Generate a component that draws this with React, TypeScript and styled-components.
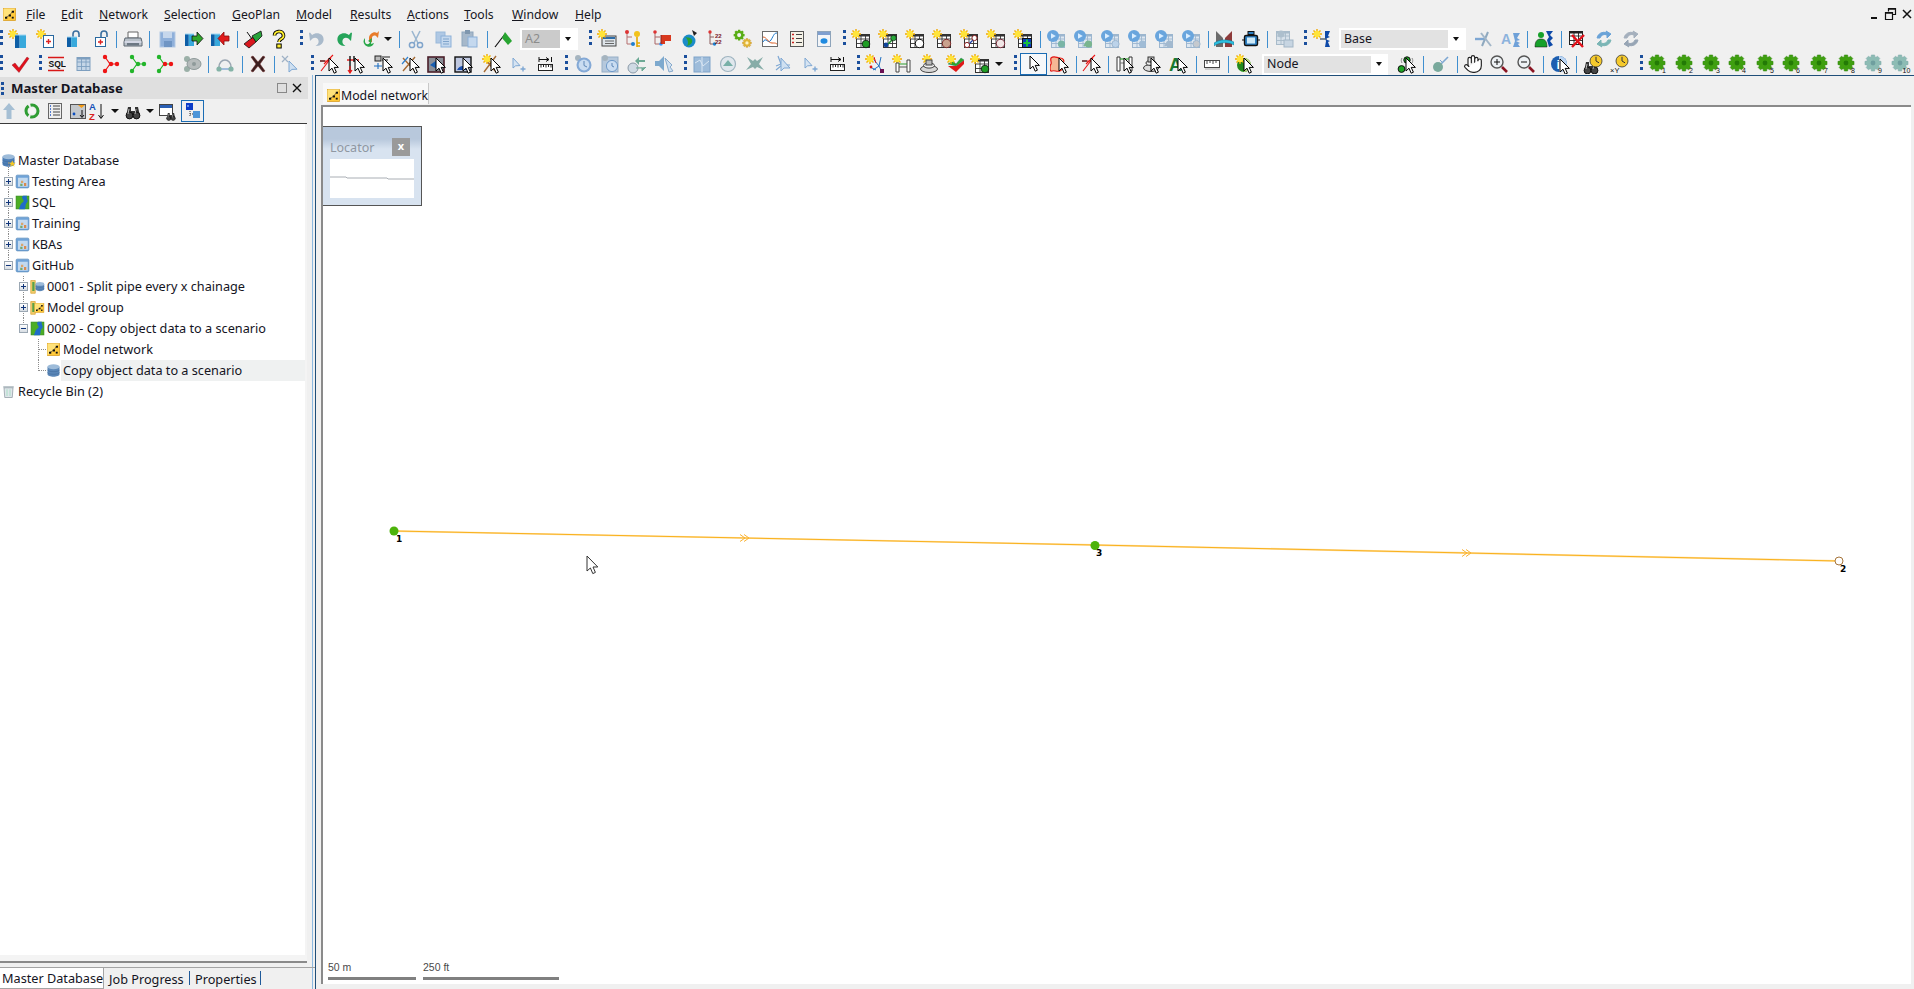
import React from "react";
import styled, { createGlobalStyle } from "styled-components";
import { Hand } from "lucide-react";

const Global = createGlobalStyle`
  html, body { margin: 0; padding: 0; width: 1914px; height: 989px; overflow: hidden; background: #f0f0f0; }
  * { box-sizing: border-box; }
  body { font-family: "Noto Sans", "DejaVu Sans", sans-serif; font-size: 12px; color: #111; }
`;

/* ---------- drawing helpers ---------- */
const Svg = styled.svg<{ $s?: number }>`
  width: ${p => p.$s ?? 20}px;
  height: ${p => p.$s ?? 20}px;
  flex: none;
  display: block;
`;
type P = { x?: number; y?: number };
const Sun = ({ x = 0, y = 0 }: P) => (
  <g transform={`translate(${x} ${y})`}>
    <path d="M5 0v10M0 5h10M1.5 1.5l7 7M8.5 1.5l-7 7" stroke="#f0a800" strokeWidth="1.4" />
    <circle cx="5" cy="5" r="3.2" fill="#ffe43a" />
  </g>
);
const Cur = ({ x = 0, y = 0 }: P) => (
  <path transform={`translate(${x} ${y})`} d="M0 0v13l3-2.8 2.2 5 2.2-1-2.2-4.8h4.2z" fill="#fff" stroke="#000" strokeWidth="1" strokeLinejoin="miter" />
);
const Cell = ({ x = 0, y = 0, c = "#333", bg = "#fff" }: P & { c?: string; bg?: string }) => (
  <g transform={`translate(${x} ${y})`}>
    <rect x=".5" y=".5" width="13" height="13" fill={bg} stroke={c} />
    <path d="M.5 5h13M.5 9.5h13M5 .5v13M9.5 .5v13" stroke={c} strokeWidth=".9" />
    <path d="M.5 .5h13v2h-13z" fill={c} />
  </g>
);
const Box = ({ x = 0, y = 0, w = 10, h = 12 }: P & { w?: number; h?: number }) => (
  <g>
    <rect x={x} y={y} width={w * 0.42} height={h} fill="#0d5ea6" />
    <rect x={x + w * 0.42} y={y} width={w * 0.58} height={h} fill="#38a9dc" />
    <path d={`M${x} ${y}h${w}`} stroke="#9fd6f2" />
  </g>
);
const Plus = ({ x = 0, y = 0, c = "#d22" }: P & { c?: string }) => (
  <path d={`M${x} ${y - 2.5}v5M${x - 2.5} ${y}h5`} stroke={c} strokeWidth="1.4" />
);
const Lock = ({ doc }: { doc?: boolean }) => (
  <>
    <path d="M10 8V5a3 3 0 0 1 6 0v3" fill="none" stroke="#3b6f9f" strokeWidth="1.6" />
    {doc ? <rect x="4.5" y="8.5" width="10" height="9" fill="#fff" stroke="#29689f" /> : <Box x={4} y={8} w={10} h={10} />}
    {doc && <Plus x={9.5} y={13} />}
  </>
);
const Nodes = ({ a, b }: { a: string; b: string }) => (
  <>
    <path d="M4 3l5 7-5 7M9 10h8" stroke={a} strokeWidth="1.2" fill="none" />
    <circle cx="4" cy="3" r="2.2" fill={a} />
    <circle cx="4" cy="17" r="2.2" fill={a} />
    <circle cx="10" cy="10" r="2.2" fill={b} />
    <circle cx="16" cy="10" r="2.2" fill={b} />
  </>
);
const Play = ({ kind, c }: { kind: "dot" | "ring" | "link"; c: string }) => (
  <>
    <Cell x={5} y={5} c="#9cb6cf" bg="#dfe8f1" />
    <circle cx="7" cy="7" r="6" fill="#69a5dd" />
    <path d="M5 4.2v5.6l4.8-2.8z" fill="#dbeeff" />
    {kind === "link" ? <path d="M11 17l4-4" stroke={c} strokeWidth="2.2" /> : null}
    <circle cx="15.5" cy="15" r="3.6" fill={c} stroke={kind === "ring" ? "#9cb6cf" : "none"} />
  </>
);
const SunGrid = ({ children }: { children?: React.ReactNode }) => (
  <>
    <Cell x={5} y={5} c="#333" />
    <Sun x={0} y={0} />
    {children}
  </>
);
const Tool = ({ children, off = false }: { children?: React.ReactNode; off?: boolean }) => (
  <>
    {children}
    {off ? <path d="M10 6v11l2.6-2.5 4.6-.2z" fill="#dbe8f5" stroke="#8eb0d2" /> : <Cur x={9} y={4} />}
  </>
);
const Clock = ({ x = 10, y = 10, r = 7, c = "#f5c92c", h = "#333" }: P & { r?: number; c?: string; h?: string }) => (
  <>
    <circle cx={x} cy={y} r={r} fill={c} stroke={h} strokeWidth=".8" />
    <path d={`M${x} ${y - r * 0.7}V${y}l${r * 0.5} ${r * 0.3}`} stroke={h} fill="none" />
  </>
);
const Ruler = ({ arrows = false }: { arrows?: boolean }) => (
  <>
    <rect x="3.5" y="10.5" width="14" height="6" fill="#fff" stroke="#222" />
    <path d="M6 11v2.5M8.5 11v2M11 11v2.5M13.5 11v2M16 11v2.5" stroke="#222" />
    {arrows && <path d="M4 3v5M4 5.5h10M11 3.5l3 2-3 2M16.5 3v5" stroke="#111" fill="none" />}
  </>
);
const gearPath = (() => {
  const pts: string[] = [];
  const n = 8;
  for (let i = 0; i < n; i++) {
    const a = (i / n) * Math.PI * 2;
    const w = 0.2;
    [[-w * 1.5, 6.4], [-w, 8.2], [w, 8.2], [w * 1.5, 6.4]].forEach(([d, r]) => {
      pts.push(`${(9 + r * Math.cos(a + d)).toFixed(2)} ${(9 + r * Math.sin(a + d)).toFixed(2)}`);
    });
  }
  return `M${pts.join("L")}Z`;
})();
const GearNum = styled.text`
  font-family: "Liberation Sans", sans-serif;
  font-size: 7px;
  fill: #111;
`;
const Gear = ({ n, off }: { n: number; off?: boolean }) => (
  <>
    <path d={gearPath} fill={off ? "#8dbcb4" : "#3f9f10"} stroke={off ? "#7aa7a8" : "#2d8208"} strokeWidth=".5" />
    <circle cx="9" cy="9" r="2.4" fill={off ? "#6f9f9f" : "#237a06"} />
    <GearNum x={n > 9 ? 11.5 : 14} y="18.5">{n}</GearNum>
  </>
);
const Tiny = styled.text<{ $size?: number; $bold?: boolean; $color?: string }>`
  font-family: "Liberation Sans", sans-serif;
  font-size: ${p => p.$size ?? 7}px;
  font-weight: ${p => (p.$bold ? 700 : 400)};
  fill: ${p => p.$color ?? "#111"};
`;
const Cyl = ({ c = "#5b87b8" }: { c?: string }) => (
  <>
    <path d="M2 5v10c0 4.4 16 4.4 16 0V5z" fill={c} />
    <ellipse cx="10" cy="5" rx="8" ry="3.4" fill="#9dbbd9" />
    <path d="M2 9c0 3.4 16 3.4 16 0M2 12.5c0 3.4 16 3.4 16 0" stroke="#3e6797" fill="none" strokeWidth=".7" />
  </>
);
const Binoc = ({ x = 0, y = 0 }: P) => (
  <g transform={`translate(${x} ${y})`}>
    <path d="M1 14l2-9h3v4h4V5h3l2 9z" fill="#333" />
    <circle cx="4.5" cy="13.5" r="3.4" fill="#444" stroke="#111" />
    <circle cx="11.5" cy="13.5" r="3.4" fill="#444" stroke="#111" />
    <path d="M3 12l1-5M10 12l1-5" stroke="#bbb" />
  </g>
);
const Arrows = ({ a = "#6aa3d8", b = "#7ab5b5" }: { a?: string; b?: string }) => (
  <>
    <path d="M3 9a7 7 0 0 1 10-5l-1-2 5 3-4 4V6a5 5 0 0 0-7 3z" fill={a} stroke={a} />
    <path d="M17 11a7 7 0 0 1-10 5l1 2-5-3 4-4v3a5 5 0 0 0 7-3z" fill={b} stroke={b} />
  </>
);
const NetSquare = () => (
  <>
    <rect x="2" y="2" width="16" height="16" fill="#ffc93a" stroke="#d89a1e" />
    <path d="M2 2h16L2 18z" fill="#ffe27a" />
    <path d="M5 14l5-3 4-5" stroke="#444" strokeWidth=".8" fill="none" />
    <rect x="4" y="13" width="3" height="2.6" fill="#111" />
    <rect x="9" y="10" width="3" height="2.6" fill="#111" />
    <rect x="13" y="5" width="3" height="2.6" fill="#111" />
    <rect x="13" y="13" width="2.6" height="2.4" fill="#111" />
  </>
);
const Catalog = () => (
  <>
    <rect x="1.5" y="1.5" width="17" height="17" rx="1.5" fill="#6fa3d8" stroke="#5f8fbe" />
    <rect x="4" y="5" width="13" height="12" fill="#c2d9ef" />
    <rect x="8" y="9" width="3" height="3" fill="#dba56b" />
    <rect x="12" y="12" width="3" height="4" fill="#d98b50" />
    <rect x="7" y="13" width="3" height="3" fill="#76a96b" />
  </>
);
const River = () => (
  <>
    <rect x="1.5" y="1.5" width="17" height="17" fill="#4cae23" stroke="#2f8a16" />
    <path d="M11 1c-5 3 4 6-1 9-4 3-3 6-5 9h8c2-3 0-6 3-9 3-3-2-6 0-9z" fill="#1f6cc8" />
  </>
);
const Folder = ({ children }: { children?: React.ReactNode }) => (
  <>
    <path d="M1 2h6v17H1z" fill="#f2cc6c" stroke="#d9a63c" />
    <path d="M3 4h3v12H3z" fill="#58a24a" />
    {children}
  </>
);

const icons: Record<string, React.ReactNode> = {
  newDb: <><Sun x={0} y={0} /><Box x={7} y={6} w={11} h={13} /></>,
  newRun: <><Sun x={0} y={0} /><rect x="7.5" y="6.5" width="10" height="12" fill="#fff" stroke="#29689f" /><Plus x={12.5} y={12.5} /></>,
  lock: <Lock />,
  lockPlus: <Lock doc />,
  printer: <>
    <path d="M5 3h10v6H5z" fill="#fff" stroke="#666" />
    <path d="M2 9h16l1 4v4H1v-4z" fill="#b9c1c9" stroke="#5c6670" />
    <path d="M1.5 13h17" stroke="#eef" />
    <rect x="4" y="14" width="12" height="2.5" fill="#6c7883" />
  </>,
  saveOff: <><rect x="3" y="3" width="15" height="15" fill="#8fb0da" stroke="#b3c9e4" /><rect x="6" y="3" width="9" height="6" fill="#c6d7ec" /><rect x="7" y="12" width="8" height="6" fill="#6f95c4" /></>,
  sendGreen: <><Box x={1} y={5} w={9} h={12} /><path d="M8 7h5V3l6 6.5-6 6.5v-4H8z" fill="#2fa52b" stroke="#111" strokeWidth=".8" /></>,
  sendRed: <><Box x={1} y={5} w={9} h={12} /><path d="M19 7h-5V3L8 9.5l6 6.5v-4h5z" fill="#e01b1b" stroke="#8a0a0a" strokeWidth=".8" /></>,
  pins: <><path d="M1 15l9-7 3 5-7 6z" fill="#d9171e" stroke="#111" strokeWidth=".8" /><path d="M18 2l-9 5 4 6 6-6z" fill="#29a33a" stroke="#111" strokeWidth=".8" /><path d="M4 3l5 7" stroke="#111" /></>,
  question: <>
    <path d="M5.5 6.5a4.5 4 0 1 1 6.5 3.6c-1.5.9-2 1.5-2 3" fill="none" stroke="#000" strokeWidth="3.6" />
    <path d="M5.5 6.5a4.5 4 0 1 1 6.5 3.6c-1.5.9-2 1.5-2 3" fill="none" stroke="#ffef2e" strokeWidth="1.8" />
    <rect x="7.8" y="15" width="4.4" height="4" fill="#ffef2e" stroke="#000" />
  </>,
  undoOff: <path d="M3 4l1 8 2.6-2.4c3-2 6 0 6 3 0 2-1 3.5-3 4.4 5 .4 8-3 8-6.4 0-6-7-8-11.5-4.6L4 3.5z" fill="#a9bacb" />,
  redoGreen: <path d="M17 4l-1 8-2.6-2.4c-3-2-6 0-6 3 0 2 1 3.5 3 4.4-5 .4-8-3-8-6.4 0-6 7-8 11.5-4.6L16 3.5z" fill="#25a45a" />,
  redoMulti: <>
    <path d="M18 2l-1 7-2-2c-2-1-4 0-4 2v4H8V9c0-4 5-7 8-5z" fill="#e87b2a" />
    <path d="M11 9l-1 6 3-1c-1 4-6 5-9 2-2-2-2-5 0-7v4c1 3 4 3 5 0L7 12z" fill="#29a84a" />
  </>,
  scissorsOff: <><path d="M6 2l6 12M14 2L8 14" stroke="#9bb7d0" strokeWidth="1.6" /><circle cx="6" cy="16" r="2.6" fill="none" stroke="#7fa4cb" strokeWidth="1.5" /><circle cx="14" cy="16" r="2.6" fill="none" stroke="#7fa4cb" strokeWidth="1.5" /></>,
  copyOff: <><rect x="3" y="3" width="9" height="11" fill="#afc8e4" stroke="#9ab9da" /><rect x="8" y="7" width="10" height="11" fill="#c4d8ee" stroke="#8cb0d8" /><path d="M10 10h6M10 12.5h6M10 15h6" stroke="#7fa4cb" /></>,
  pasteOff: <><rect x="3" y="3" width="11" height="14" fill="#a6b8ca" stroke="#8ea5bc" /><rect x="6" y="1" width="5" height="4" fill="#7f97ae" /><rect x="9" y="8" width="9" height="10" fill="#c4d8ee" stroke="#8cb0d8" /></>,
  flag: <><path d="M2 18L12 5" stroke="#111" strokeWidth="1.2" /><path d="M12 3l7 9-4 4-6-7z" fill="#28a531" /></>,
  sunCard: <><rect x="5" y="7" width="14" height="10" fill="#dfe5ea" stroke="#444" /><path d="M6 9h12" stroke="#2d6ca8" strokeWidth="2" /><path d="M8 12h9M8 14.5h9" stroke="#666" /><Sun x={0} y={0} /></>,
  keyTree: <><path d="M4 3v12h5M4 8h5" stroke="#b56f6f" fill="none" /><circle cx="4" cy="3" r="2" fill="#d33" /><circle cx="10" cy="15" r="2" fill="#1f7fd0" /><circle cx="14" cy="5" r="3" fill="#f2c21b" /><path d="M14 8v10M14 14h3M14 17h3" stroke="#e5a800" strokeWidth="1.6" /></>,
  flagTree: <><path d="M3 3v12h5M3 8h5" stroke="#a66" fill="none" /><circle cx="3" cy="3" r="1.8" fill="#d33" /><circle cx="9" cy="15" r="1.8" fill="#39f" /><path d="M9 6h10v6h-6v3H9z" fill="#d8391f" /><path d="M9 6v9" stroke="#822" /></>,
  globe: <><circle cx="9" cy="12" r="6.5" fill="#1b8bc9" /><path d="M5 8c3 2 4 6 2 9 3-1 6-3 5-6-1-3-4-2-7-3z" fill="#2aa32d" /><path d="M12 1l5 3-3 3z" fill="#222" /></>,
  tree2222: <><path d="M4 3v12h4M4 8h4" stroke="#8a5c5c" fill="none" /><circle cx="4" cy="3" r="1.7" fill="#d33" /><circle cx="8.5" cy="15" r="1.7" fill="#1f7fd0" /><Tiny x="9" y="9" $size={6} $bold $color="#7a1a2a">22</Tiny><Tiny x="9" y="14.5" $size={6} $bold $color="#7a1a2a">22</Tiny></>,
  gearSun: <>
    <g transform="scale(.68)"><path d={gearPath} fill="#58ad14" /><circle cx="9" cy="9" r="3" fill="#f0f0f0" /></g>
    <g transform="translate(9 9) scale(.55)"><path d={gearPath} fill="#e3b73a" stroke="#b77f10" strokeWidth=".6" /><circle cx="9" cy="9" r="3" fill="#fff4c4" /></g>
  </>,
  chart: <><rect x="2.5" y="2.5" width="15" height="15" fill="#fff" stroke="#6b6b6b" /><path d="M3 13c3-6 5 3 8-2s3-7 6-7" stroke="#1c78cc" fill="none" /><path d="M3 8c4 0 5 6 9 6s3 0 5 1" stroke="#d9581c" fill="none" /></>,
  checklist: <><rect x="3.5" y="2.5" width="13" height="15" fill="#f6f3e8" stroke="#555" /><path d="M5 5.5h2M5 9.5h2M5 13.5h2" stroke="#c22" strokeWidth="1.6" /><path d="M9 5.5h6M9 9.5h6M9 13.5h6" stroke="#444" /></>,
  win: <><rect x="3.5" y="2.5" width="13" height="15" fill="#f3f5f8" stroke="#8ea4bb" /><rect x="4" y="3" width="12" height="3" fill="#7f9fd0" /><ellipse cx="10" cy="12" rx="3.5" ry="2.8" fill="#1f8ae0" /></>,
  gDot: <SunGrid><circle cx="15" cy="15" r="3.8" fill="#1f9d24" stroke="#111" strokeWidth=".8" /></SunGrid>,
  gLink: <SunGrid><path d="M8 17l8-8" stroke="#1f8f2e" strokeWidth="1.6" /><circle cx="8" cy="16" r="2.4" fill="#149" /><circle cx="15.5" cy="9" r="2.8" fill="#28a83a" stroke="#111" strokeWidth=".6" /></SunGrid>,
  gRing: <SunGrid><circle cx="14.5" cy="14.5" r="4.2" fill="#fff" stroke="#111" /></SunGrid>,
  gBrown: <SunGrid><circle cx="14.5" cy="14.5" r="4.2" fill="#c9a18d" stroke="#7a2a2a" /></SunGrid>,
  gPink: <SunGrid><path d="M8 17l8-8" stroke="#2244aa" strokeWidth="1.2" /><circle cx="8" cy="16" r="2.6" fill="#fff" stroke="#822" /><circle cx="15.5" cy="9" r="2.6" fill="#fff" stroke="#822" /></SunGrid>,
  gOut: <SunGrid><circle cx="14.5" cy="14.5" r="4.2" fill="#f0e6e6" stroke="#7a2a3a" /></SunGrid>,
  gBlue: <SunGrid><rect x="9.5" y="9.5" width="9" height="9" fill="#0d3fb8" stroke="#111" /><path d="M14 10.5v7M10.5 14h7" stroke="#19c23c" strokeWidth="2" /></SunGrid>,
  p1: <Play kind="dot" c="#79b5a6" />,
  p2: <Play kind="link" c="#79b58f" />,
  p3: <Play kind="ring" c="#bcd3ea" />,
  p4: <Play kind="dot" c="#a0bcd6" />,
  p5: <Play kind="link" c="#a2b9cf" />,
  p6: <Play kind="ring" c="#c5c9ce" />,
  bridge: <><path d="M2 2l7 7v9H2z" fill="#6b6b6b" /><path d="M18 2l-7 7v9h7z" fill="#8d3a3a" /><path d="M0 14c6-4 14-4 20-1v3c-6-3-14-3-20 1z" fill="#2cc0e0" stroke="#157" strokeWidth=".4" /></>,
  camBox: <><rect x="3.5" y="6.5" width="13" height="10" rx="1.5" fill="#2c7fc2" stroke="#111" strokeWidth="1.4" /><rect x="6" y="8.5" width="8" height="6" fill="#cfeaf8" /><rect x="7" y="2.5" width="6" height="3" fill="#2c7fc2" stroke="#111" /><path d="M1 11h3M16 11h3" stroke="#111" /></>,
  gridOff: <><Cell x={2} y={2} c="#a8bbca" bg="#d7e1ea" /><rect x="10" y="11" width="9" height="7" fill="#c7d5e2" stroke="#a2b5c6" /><circle cx="7" cy="5" r="3.5" fill="#adbfcd" /></>,
  sunFork: <><Sun x={0} y={0} /><path d="M8 10h7" stroke="#123" /><path d="M13 2h5l-2 5 2 1-5 2 5 2-2 1 2 5h-5l1-6-1-3z" fill="#0d49a8" /></>,
  crossOff: <><path d="M1 10h11" stroke="#7ea7d3" strokeWidth="2.4" /><path d="M14 3L8 17" stroke="#8fa9bf" strokeWidth="2" /><path d="M7 4l10 13" stroke="#a2b6c8" strokeWidth="2" /></>,
  aOff: <><Tiny x="0" y="15" $size={14} $bold $color="#8db3dd">A</Tiny><path d="M12 4h7l-3 5 3 2-4 1 4 2-2 1 2 3h-7l2-6z" fill="#6fa1d8" /></>,
  person: <><circle cx="7" cy="6" r="3" fill="#16a02a" /><path d="M1 18c0-7 3-8 6-8s6 1 6 8z" fill="#16a02a" stroke="#111" strokeWidth=".5" /><path d="M12 2h7l-3 4 3 3-3 3 3 4-4 2-2-7 2-3z" fill="#0d49a8" /></>,
  gridX: <><Cell x={2} y={2} c="#222" bg="#fff" /><path d="M5 6l11 12M17 6L5 18" stroke="#e3111a" strokeWidth="2.4" /></>,
  arrowsOff: <Arrows />,
  arrowsGray: <Arrows a="#a5b0bd" b="#97a5b5" />,
  arrowOffUp: <path d="M10 2l6 7h-3.5v9h-5V9H4z" fill="#a6bfd4" />,

  check: <path d="M2 11l3-2 4 5 8-11 2 1.5-10 14z" fill="#e2101c" stroke="#8a0d14" strokeWidth=".4" />,
  sql: <><path d="M2 3.5h16M2 16.5h16" stroke="#d81818" strokeWidth="1.6" /><Tiny x="2.5" y="13" $size={8.5} $bold>SQL</Tiny></>,
  tableOff: <Cell x={2.5} y={3} c="#7e9fbf" bg="#c5d6e7" />,
  nodesRed: <Nodes a="#ee1414" b="#ee1414" />,
  nodesGreen: <Nodes a="#22b52a" b="#22b52a" />,
  nodesMix: <Nodes a="#22b52a" b="#ee1414" />,
  swirlOff: <><circle cx="5" cy="5" r="3" fill="#9bb0a8" /><circle cx="5" cy="15" r="3" fill="#9bb0a8" /><ellipse cx="12" cy="10" rx="7" ry="5.5" fill="#b6bcbc" stroke="#8e9a9a" /><circle cx="12" cy="10" r="2" fill="#8e9a9a" /></>,
  linkOff: <><path d="M4 13a6 7 0 0 1 12 0" fill="none" stroke="#9aa6b2" strokeWidth="1.5" /><path d="M5 15h10" stroke="#7ea7d3" strokeWidth="1.4" /><circle cx="4" cy="15" r="2.6" fill="#84b3a7" /><circle cx="16" cy="15" r="2.6" fill="#84b3a7" /></>,
  bigX: <path d="M3 3l2-1 5 6 5-6 2 1-5 7 5 7-2 1-5-6-5 6-2-1 5-7z" fill="#3a1f1f" stroke="#6b2020" strokeWidth=".5" />,
  xCurOff: <><path d="M1 2l6 6M7 2L1 8" stroke="#9fb2c6" strokeWidth="1.2" /><path d="M8 7v11l3-2.6 5-.2z" fill="#cfe0f1" stroke="#7ea7d3" /></>,
  cRed: <Tool><path d="M0 7h9M1 17L11 4M13 1L4 10" stroke="#ea1616" strokeWidth="1.1" /><path d="M0 7h5" stroke="#111" /></Tool>,
  cVert: <Tool><path d="M1 6h12" stroke="#ea1616" strokeWidth="1.4" /><path d="M4 2v15M8 2v6" stroke="#111" strokeWidth="1.4" /><path d="M4 12v6M2 16l2 3 2-3" stroke="#ea1616" strokeWidth="1.2" fill="none" /></Tool>,
  cBoxes: <Tool><rect x="1" y="2" width="6" height="5" fill="#bbb" stroke="#222" /><path d="M8 3h8M8 6h6" stroke="#666" strokeWidth="1.6" /><path d="M0 12h8M4 9v6" stroke="#1e6fc2" strokeWidth="1.1" /></Tool>,
  cX: <Tool><path d="M2 4l12 13M14 3L2 17" stroke="#a56a33" strokeWidth="1.4" /><path d="M1 10l6-7" stroke="#2f82d0" strokeWidth="1.2" /></Tool>,
  cFrame: <Tool><rect x="1" y="3" width="16" height="15" fill="#8a8f97" stroke="#4a1f2a" strokeWidth="1.6" /><path d="M3 11l7-5v9z" fill="#1a5fb0" /></Tool>,
  cFrame2: <Tool><rect x="1" y="3" width="16" height="15" fill="#bfc8e0" stroke="#111" strokeWidth="1.4" /><path d="M3 16c2-4 6-5 9-3v3z" fill="#1a4fb0" /></Tool>,
  cSunX: <Tool><path d="M3 5l11 13M14 2L2 18" stroke="#a56a33" strokeWidth="1.4" /><Sun x={0} y={0} /></Tool>,
  plusOff: <><path d="M5 4v10l2.6-2.2 4.4-.2z" fill="#d7e4f2" stroke="#7ea7d3" /><Plus x={15} y={15} c="#7ea7d3" /></>,
  ruler: <Ruler arrows />,
  clockOff: <><circle cx="5" cy="4" r="3" fill="#a5b4bf" /><circle cx="11" cy="11" r="7.5" fill="#84a9d6" /><circle cx="11" cy="11" r="5.4" fill="#c9dcf1" /><path d="M11 7v4.5l3 1.5" stroke="#5e87b6" fill="none" /></>,
  clockGridOff: <><rect x="2" y="3" width="16" height="15" fill="#b5c8dc" stroke="#96aec6" /><circle cx="5" cy="4" r="3" fill="#a5b4bf" /><circle cx="12" cy="12" r="5.6" fill="#c9dcf1" stroke="#6f9ac9" /><path d="M12 9v3l2 1" stroke="#5e87b6" fill="none" /></>,
  clockArrOff: <><circle cx="6" cy="14" r="5" fill="#cfdae4" stroke="#8b9aa8" /><path d="M8 7l4-4v3h6v2h-6v3z" fill="#6da995" /><path d="M19 13l-4 4v-3h-6" fill="#6da995" stroke="#6da995" /></>,
  speakerOff: <><path d="M1 7h4l5-5v15l-5-5H1z" fill="#7da9ce" /><path d="M11 4l7 7-2 2 3 4-4 1z" fill="#cfe0f1" stroke="#88aacb" /></>,
  winOff: <><rect x="2" y="3" width="16" height="15" fill="#9ebcda" stroke="#7ea3c9" /><path d="M10 3v15M3 9l5-3 3 6 6-5" stroke="#d9e6f3" fill="none" /></>,
  triOff: <><circle cx="10" cy="10" r="7.5" fill="#e0e7ed" stroke="#9fb4c0" strokeWidth="1.2" /><path d="M5 12l5-6 5 6z" fill="#78b0a8" /></>,
  starOff: <path d="M2 3l6 4 2-2 2 2 6-4-4 7 5 6-7-3-2 2-2-2-7 3 5-6z" fill="#87ada8" />,
  branchOff: <><path d="M5 2l3 8-5 2M3 16l6-5 8 0" stroke="#7ea7d3" strokeWidth="1.2" fill="none" /><path d="M8 4v13l3-3 6 0z" fill="#cfe0f1" stroke="#7ea7d3" /></>,
  sunTree: <><Sun x={0} y={0} /><path d="M9 6l5 6 2-9M14 12l3 6M14 12l-6 4M5 13l6 3" stroke="#1f6fc2" fill="none" /><path d="M11 9l-2-6" stroke="#d11" /><rect x="15" y="15" width="4" height="4" fill="#6a1053" /><circle cx="6" cy="13" r="1.4" fill="#d11" /></>,
  sunBar: <><Sun x={0} y={0} /><path d="M4 9h3v9H4zM15 6h3v12h-3z" fill="#fff" stroke="#444" /><path d="M7 10h8" stroke="#2c9d2c" /><path d="M7 13h8" stroke="#555" /></>,
  sunStack: <><Sun x={3} y={0} /><ellipse cx="10" cy="15" rx="8.5" ry="3.5" fill="#d7d7d7" stroke="#444" /><ellipse cx="10" cy="11.5" rx="5.5" ry="2.6" fill="#eee" stroke="#444" /><rect x="7" y="6" width="6" height="5" fill="#bbb" stroke="#444" /></>,
  sun3d: <><path d="M2 12l8 6 8-8V6l-8 6z" fill="#e01818" /><path d="M2 10l5-3 3 3 5-6 3 2-8 6z" fill="#2fa52b" stroke="#176" strokeWidth=".4" /><Sun x={0} y={0} /></>,
  cursor: <Cur x={6} y={2} />,
  blob: <Tool><path d="M1 4c3-3 6 0 9 0s5 2 3 6 1 6-3 7-5-1-8 0-2-6-1-7-1-4 0-6z" fill="#f6b794" stroke="#e21515" strokeWidth="1.2" /></Tool>,
  cIBar: <Tool><path d="M2 3h3v14H2zM14 3h3v14h-3z" fill="#fff" stroke="#333" /><path d="M5 5h9" stroke="#2c9d2c" strokeWidth="1.2" /><path d="M5 9h9" stroke="#777" /></Tool>,
  cStack: <Tool><ellipse cx="9" cy="14" rx="7.5" ry="3.5" fill="#ddd" stroke="#333" /><ellipse cx="9" cy="9" rx="5" ry="2.4" fill="#eee" stroke="#333" /><rect x="6" y="3" width="6" height="5" fill="#ccc" stroke="#333" /></Tool>,
  cA: <Tool><Tiny x="0" y="17" $size={18} $color="#1a7a30" $bold>A</Tiny></Tool>,
  rulerGray: <><rect x="2.5" y="6.5" width="15" height="7" fill="#fff" stroke="#444" /><path d="M5 7v3M8 7v2M11 7v3M14 7v2" stroke="#444" /><path d="M3 15h15" stroke="#aaa" /></>,
  cSunGlobe: <Tool><circle cx="9" cy="11" r="7" fill="#238a1c" /><path d="M9 4a7 7 0 0 1 0 14z" fill="#b9d47e" /><Sun x={0} y={0} /></Tool>,
  cDots: <><path d="M5 4c-1 2-1 3 0 5M15 4c1 2 1 3 0 5" stroke="#888" fill="none" /><circle cx="10" cy="6" r="3.2" fill="#1ea524" stroke="#111" /><circle cx="4.5" cy="15" r="3.4" fill="#1ea524" stroke="#111" /><Cur x={9} y={4} /></>,
  pinOff: <><path d="M17 3l-7 7" stroke="#7ea7d3" strokeWidth="1.6" /><path d="M9 6l3 3" stroke="#7ea7d3" /><circle cx="7" cy="13" r="5" fill="#79a99c" /></>,
  zoomIn: <><path d="M13 13l5 5" stroke="#8a1422" strokeWidth="2.6" /><circle cx="8" cy="8" r="6" fill="#eef2f5" stroke="#555" strokeWidth="1.4" /><path d="M5 8h6M8 5v6" stroke="#111" /></>,
  zoomOut: <><path d="M13 13l5 5" stroke="#8a1422" strokeWidth="2.6" /><circle cx="8" cy="8" r="6" fill="#eef2f5" stroke="#555" strokeWidth="1.4" /><path d="M5 8h6" stroke="#111" /></>,
  info: <><circle cx="9" cy="10" r="8" fill="#1d5fb0" /><path d="M9 2a8 8 0 0 1 0 16z" fill="#b9d4f2" /><Tiny x="6.5" y="15" $size={13} $bold $color="#fff">i</Tiny><Cur x={10} y={5} /></>,
  binClock: <><Binoc x={0} y={3} /><Clock x={13} y={7} r={6} /></>,
  xyClock: <><Clock x={12} y={7} r={6} /><Tiny x="0" y="19" $size={7.5}>×Y</Tiny></>,

  swirlGreen: <><circle cx="10" cy="10" r="6" fill="none" stroke="#2f9d33" strokeWidth="3" strokeDasharray="11 2" /><circle cx="10" cy="10" r="3" fill="#f5f5f5" /></>,
  listBox: <><rect x="3.5" y="2.5" width="13" height="15" fill="#eee" stroke="#666" /><path d="M5 5h1M5 8h1M5 11h1M5 14h1" stroke="#1f55c8" strokeWidth="1.6" /><path d="M8 5h7M8 8h7M8 11h7M8 14h7" stroke="#444" /></>,
  sortBox: <><rect x="2.5" y="3.5" width="15" height="14" fill="#c4c8cc" stroke="#555" /><path d="M10 4h7l-3.5 3z" fill="#f59a12" /><circle cx="6" cy="13" r="1.4" fill="#0c4fc0" /><path d="M14 9v7M12 14l2 2.5 2-2.5" stroke="#111" fill="none" /></>,
  az: <><Tiny x="1" y="9" $size={9.5} $bold $color="#1550b8">A</Tiny><Tiny x="1" y="19" $size={9.5} $bold $color="#d82020">Z</Tiny><path d="M13 3v14M10.5 14l2.5 3.5 2.5-3.5" stroke="#111" fill="none" /></>,
  binoc: <Binoc x={2} y={1} />,
  winBin: <><rect x="1.5" y="3.5" width="13" height="11" fill="#fff" stroke="#444" /><rect x="2" y="4" width="12" height="3" fill="#2a5fb4" /><g transform="translate(8 9) scale(.62)"><Binoc /></g></>,
  treeToggle: <><rect x="3" y="2" width="7" height="7" fill="#0c3cc8" /><circle cx="5" cy="5" r="1" fill="#88a8f0" /><path d="M7 10v6M7 13h3" stroke="#333" strokeDasharray="1 1" /><rect x="10" y="10" width="7" height="7" fill="#4d95d8" /></>,

  dbStar: <><Cyl c="#4d7fb7" /><path d="M15 10l1.4 3h3.2l-2.6 2 1 3.2L15 16.3 12 18.2l1-3.2-2.6-2h3.2z" fill="#f5c724" /></>,
  catalog: <Catalog />,
  river: <River />,
  fCyl: <Folder><g transform="translate(6 3) scale(.72)"><Cyl /></g></Folder>,
  fNet: <Folder><g transform="translate(5 3) scale(.75)"><NetSquare /></g></Folder>,
  net: <NetSquare />,
  cyl: <Cyl />,
  bin: <><path d="M4 5l1 13h10l1-13z" fill="#dfe6ea" stroke="#8d9aa2" /><path d="M3 3h14v2H3z" fill="#a8b4bb" /><path d="M8 7v9M12 7v9" stroke="#9db" /></>,
};

const Icon = ({ name, size = 20 }: { name: string; size?: number }) => (
  <Svg $s={size} viewBox="0 0 20 20">{icons[name]}</Svg>
);

/* ---------- toolbars ---------- */
const Page = styled.div`
  width: 1914px;
  height: 989px;
  display: flex;
  flex-direction: column;
  background: #f0f0f0;
  overflow: hidden;
`;
const MenuBar = styled.div`
  height: 28px;
  display: flex;
  align-items: center;
  padding-left: 2px;
  flex: none;
`;
const MenuList = styled.div`
  margin-left: 9px;
  padding-top: 2px;
  display: flex;
  align-items: center;
`;
const MenuItem = styled.span<{ $w: number }>`
  width: ${p => p.$w}px;
  flex: none;
  font-size: 12.2px;
  line-height: 16px;
  color: #16161e;
  u { text-underline-offset: 1px; }
`;
const WinControls = styled.div`
  margin-left: auto;
  display: flex;
  align-items: center;
  gap: 2px;
`;
const WinSvg = styled.svg`
  width: 14px;
  height: 14px;
  display: block;
`;
const ToolRow = styled.div<{ $h: number; $pt?: number }>`
  height: ${p => p.$h}px;
  padding-top: ${p => p.$pt ?? 0}px;
  display: flex;
  align-items: center;
  flex: none;
`;
const Slot = styled.div<{ $ml: number }>`
  margin-left: ${p => p.$ml}px;
  width: 20px;
  height: 20px;
  flex: none;
  svg.lucide { display: block; }
`;
const ActiveSlot = styled.div<{ $ml: number }>`
  margin-left: ${p => p.$ml}px;
  width: 27px;
  height: 22px;
  flex: none;
  border: 1px solid #1a6cb4;
  display: flex;
  align-items: center;
  justify-content: center;
  background: #f6f8fa;
`;
const Sep = styled.div<{ $ml: number }>`
  margin-left: ${p => p.$ml}px;
  width: 1px;
  height: 17px;
  flex: none;
  background: #3f8fd0;
`;
const Grip = styled.div<{ $ml: number }>`
  margin-left: ${p => p.$ml}px;
  width: 3px;
  height: 18px;
  flex: none;
  background: repeating-linear-gradient(to bottom, #1b4f9c 0 3px, transparent 3px 6px);
`;
const Drop = styled.div<{ $ml: number }>`
  margin-left: ${p => p.$ml}px;
  width: 0;
  height: 0;
  flex: none;
  border-left: 4px solid transparent;
  border-right: 4px solid transparent;
  border-top: 4px solid #111;
`;
const ComboFrame = styled.div<{ $ml: number; $w: number; $h: number }>`
  margin-left: ${p => p.$ml}px;
  width: ${p => p.$w}px;
  height: ${p => p.$h}px;
  flex: none;
  background: #fff;
  display: flex;
  align-items: stretch;
  padding: 2px;
`;
const ComboValue = styled.div<{ $off?: boolean; $w: number }>`
  width: ${p => p.$w}px;
  flex: none;
  background: ${p => (p.$off ? "#cbcbcb" : "#e2e2e2")};
  color: ${p => (p.$off ? "#8c8c8c" : "#14141e")};
  font-size: 12.4px;
  line-height: 16px;
  padding: 0 0 0 3px;
  display: flex;
  align-items: center;
`;
const ComboArrow = styled.div`
  flex: 1;
  display: flex;
  align-items: center;
  justify-content: center;
  &::after {
    content: "";
    border-left: 3.5px solid transparent;
    border-right: 3.5px solid transparent;
    border-top: 4px solid #111;
  }
`;

type Item =
  | [number, string]
  | [number, "combo", number, number, string, boolean, number];

const renderRow = (items: Item[]) => {
  let cur = 0;
  return items.map((it, i) => {
    const [c, name] = it;
    if (name === "sep") { const ml = c - cur; cur = c + 1; return <Sep key={i} $ml={ml} />; }
    if (name === "grip") { const ml = c - 1 - cur; cur = c + 2; return <Grip key={i} $ml={ml} />; }
    if (name === "dd") { const ml = c - 4 - cur; cur = c + 4; return <Drop key={i} $ml={ml} />; }
    if (name === "combo") {
      const [, , w, fh, text, off, vw] = it as [number, "combo", number, number, string, boolean, number];
      const ml = c - cur; cur = c + w;
      return (
        <ComboFrame key={i} $ml={ml} $w={w} $h={fh}>
          <ComboValue $off={off} $w={vw}>{text}</ComboValue>
          <ComboArrow />
        </ComboFrame>
      );
    }
    if (name === "active") {
      const ml = c - 13 - cur; cur = c + 14;
      return <ActiveSlot key={i} $ml={ml}><Icon name="cursor" /></ActiveSlot>;
    }
    const ml = c - 10 - cur; cur = c + 10;
    if (name === "hand") {
      return <Slot key={i} $ml={ml}><Hand size={20} color="#222" fill="#fff" strokeWidth={1.4} /></Slot>;
    }
    if (name.startsWith("gear") && name !== "gearSun") {
      const n = +name.slice(4);
      return <Slot key={i} $ml={ml}><Svg viewBox="0 0 20 20"><Gear n={n} off={n > 8} /></Svg></Slot>;
    }
    return <Slot key={i} $ml={ml}><Icon name={name} /></Slot>;
  });
};

const row1: Item[] = [
  [1, "grip"], [18, "newDb"], [46, "newRun"], [73, "lock"], [101, "lockPlus"], [116, "sep"], [133, "printer"], [149, "sep"],
  [167, "saveOff"], [194, "sendGreen"], [220, "sendRed"], [237, "sep"], [253, "pins"], [279, "question"], [301, "grip"],
  [316, "undoOff"], [345, "redoGreen"], [371, "redoMulti"], [388, "dd"], [399, "sep"], [416, "scissorsOff"], [443, "copyOff"],
  [469, "pasteOff"], [487, "sep"], [503, "flag"],
  [520, "combo", 58, 22, "A2", true, 38],
  [590, "grip"], [607, "sunCard"], [633, "keyTree"], [662, "flagTree"], [690, "globe"], [716, "tree2222"], [743, "gearSun"],
  [770, "chart"], [797, "checklist"], [824, "win"], [844, "grip"], [861, "gDot"], [888, "gLink"], [915, "gRing"], [942, "gBrown"],
  [969, "gPink"], [996, "gOut"], [1023, "gBlue"], [1040, "sep"], [1056, "p1"], [1083, "p2"], [1110, "p3"], [1137, "p4"],
  [1164, "p5"], [1191, "p6"], [1208, "sep"], [1224, "bridge"], [1251, "camBox"], [1267, "sep"], [1284, "gridOff"], [1305, "grip"],
  [1322, "sunFork"], [1339, "combo", 127, 22, "Base", false, 107],
  [1484, "crossOff"], [1511, "aOff"], [1527, "sep"], [1544, "person"], [1561, "sep"], [1577, "gridX"], [1604, "arrowsOff"], [1631, "arrowsGray"],
];
const row2: Item[] = [
  [1, "grip"], [20, "check"], [40, "grip"], [56, "sql"], [84, "tableOff"], [111, "nodesRed"], [138, "nodesGreen"], [165, "nodesMix"],
  [192, "swirlOff"], [208, "sep"], [225, "linkOff"], [242, "sep"], [258, "bigX"], [274, "sep"], [291, "xCurOff"], [312, "grip"],
  [330, "cRed"], [356, "cVert"], [384, "cBoxes"], [411, "cX"], [437, "cFrame"], [464, "cFrame2"], [492, "cSunX"], [518, "plusOff"], [545, "ruler"],
  [566, "grip"], [583, "clockOff"], [610, "clockGridOff"], [637, "clockArrOff"], [664, "speakerOff"], [685, "grip"], [702, "winOff"],
  [728, "triOff"], [755, "starOff"], [783, "branchOff"], [810, "plusOff"], [837, "ruler"], [858, "grip"], [875, "sunTree"], [902, "sunBar"],
  [929, "sunStack"], [956, "sun3d"], [980, "gDot"], [999, "dd"], [1015, "grip"], [1033, "active"], [1060, "blob"], [1076, "sep"],
  [1092, "cRed"], [1108, "sep"], [1125, "cIBar"], [1152, "cStack"], [1179, "cA"], [1196, "sep"], [1212, "rulerGray"], [1228, "sep"], [1245, "cSunGlobe"],
  [1262, "combo", 126, 21, "Node", false, 107],
  [1407, "cDots"], [1423, "sep"], [1441, "pinOff"], [1457, "sep"], [1473, "hand"], [1499, "zoomIn"], [1526, "zoomOut"], [1543, "sep"],
  [1560, "info"], [1576, "sep"], [1593, "binClock"], [1620, "xyClock"], [1641, "grip"],
  [1658, "gear1"], [1685, "gear2"], [1712, "gear3"], [1738, "gear4"], [1766, "gear5"], [1792, "gear6"], [1820, "gear7"], [1847, "gear8"], [1874, "gear9"], [1901, "gear10"],
];
const panelRow: Item[] = [
  [9, "arrowOffUp"], [32, "swirlGreen"], [55, "listBox"], [78, "sortBox"], [98, "az"], [115, "dd"], [133, "binoc"], [150, "dd"], [168, "winBin"],
];

const menus: [string, string, number][] = [
  ["F", "ile", 35], ["E", "dit", 38], ["N", "etwork", 65], ["S", "election", 68], ["G", "eoPlan", 64], ["M", "odel", 54],
  ["R", "esults", 57], ["A", "ctions", 57], ["T", "ools", 48], ["W", "indow", 63], ["H", "elp", 30],
];

/* ---------- main area ---------- */
const Main = styled.div`
  flex: 1;
  display: flex;
  min-height: 0;
`;
const Dock = styled.div`
  width: 313px;
  flex: none;
  padding-top: 2px;
  display: flex;
  flex-direction: column;
  border-right: 1px solid #8db9e0;
`;
const PanelHead = styled.div`
  height: 22px;
  width: 308px;
  background: #dfdfdf;
  display: flex;
  align-items: center;
  padding-left: 1px;
  flex: none;
`;
const PanelGrip = styled.div`
  width: 3px;
  height: 13px;
  background: repeating-linear-gradient(to bottom, #1b4f9c 0 3px, transparent 3px 5px);
`;
const PanelTitle = styled.span`
  margin-left: 7px;
  font-weight: 700;
  font-size: 13.2px;
  color: #14141e;
`;
const PanelButtons = styled.div`
  margin-left: auto;
  display: flex;
  gap: 1px;
  align-items: center;
  padding-right: 4px;
`;
const PanelTools = styled.div`
  height: 24px;
  width: 308px;
  display: flex;
  align-items: center;
  flex: none;
`;
const Toggle = styled.div`
  width: 23px;
  height: 22px;
  margin-left: 3px;
  border: 1px solid #1a6cb4;
  display: flex;
  align-items: center;
  justify-content: center;
  flex: none;
`;
const Tree = styled.div`
  flex: 1;
  width: 307px;
  background: #fff;
  border-top: 1px solid #3a3a3a;
  border-bottom: 2px solid #8a8a8a;
  padding-top: 26px;
  box-shadow: inset -2px -6px 0 #f4f4f4;
`;
const Row = styled.div<{ $indent: number }>`
  position: relative;
  height: 21px;
  display: flex;
  align-items: center;
  padding-left: ${p => p.$indent}px;
`;
const RowLabel = styled.span<{ $sel?: boolean }>`
  height: 21px;
  line-height: 21px;
  flex: ${p => (p.$sel ? 1 : "none")};
  margin-right: ${p => (p.$sel ? 2 : 0)}px;
  background: ${p => (p.$sel ? "#eff1f1" : "transparent")};
  padding-left: 2px;
  font-size: 12.7px;
  white-space: pre;
  color: #14141e;
`;
const Expander = styled.span<{ $open?: boolean }>`
  width: 9px;
  height: 9px;
  flex: none;
  margin-right: 2px;
  margin-left: -13px;
  border: 1px solid #9ba7b3;
  background: linear-gradient(#fff, #d7dde3);
  position: relative;
  z-index: 1;
  &::before { content: ""; position: absolute; left: 1px; right: 1px; top: 3px; height: 1px; background: #10357a; }
  &::after { content: ""; position: absolute; top: 1px; bottom: 1px; left: 3px; width: 1px; background: ${p => (p.$open ? "transparent" : "#10357a")}; }
`;
const GuideV = styled.span<{ $x: number; $h: number; $top?: number }>`
  position: absolute;
  left: ${p => p.$x}px;
  top: ${p => p.$top ?? 0}px;
  height: ${p => p.$h}px;
  border-left: 1px dotted #8c8c8c;
`;
const GuideH = styled.span<{ $x: number; $w: number }>`
  position: absolute;
  left: ${p => p.$x}px;
  top: 10px;
  width: ${p => p.$w}px;
  border-top: 1px dotted #8c8c8c;
`;
const Tabs = styled.div`
  height: 22px;
  margin-top: 4px;
  border-top: 1px solid #a4a4a4;
  display: flex;
  align-items: center;
  flex: none;
  margin-right: -3px;
`;
const Tab = styled.div<{ $on?: boolean; $w: number }>`
  width: ${p => p.$w}px;
  height: 100%;
  flex: none;
  font-size: 12.7px;
  white-space: nowrap;
  display: flex;
  align-items: center;
  padding-left: ${p => (p.$on ? 2 : 5)}px;
  color: #14141e;
  background: ${p => (p.$on ? "#fff" : "transparent")};
  border-right: ${p => (p.$on ? "1px solid #a4a4a4" : "none")};
  border-bottom: ${p => (p.$on ? "1px solid #a4a4a4" : "none")};
  position: relative;
  &::after {
    content: ${p => (p.$on ? "none" : '""')};
    position: absolute;
    right: 0;
    top: 3px;
    height: 14px;
    width: 1px;
    background: #1f5a9a;
  }
`;
const Work = styled.div`
  flex: 1;
  margin-left: 2px;
  border-left: 1px solid #1f4e79;
  border-top: 1px solid #1f4e79;
  display: flex;
  flex-direction: column;
  padding: 7px 3px 5px 5px;
  min-width: 0;
`;
const DocTab = styled.div`
  width: 106px;
  height: 21px;
  margin-left: 2px;
  padding: 3px 0 0 3px;
  background: #f8f8f8;
  border-right: 1px solid #c8c8c8;
  display: flex;
  align-items: center;
  font-size: 12.3px;
  color: #14141e;
  white-space: nowrap;
  flex: none;
`;
const Canvas = styled.div`
  position: relative;
  flex: 1;
  margin-top: 1px;
  background: #fff;
  border-top: 2px solid #8a8a8a;
  border-left: 2px solid #8a8a8a;
  overflow: hidden;
`;
const Drawing = styled.svg`
  position: absolute;
  left: 0;
  top: 0;
  width: 100%;
  height: 100%;
`;
const NodeLabel = styled.text<{ $bold?: boolean }>`
  font-family: "DejaVu Sans", sans-serif;
  font-size: 9px;
  font-weight: ${p => (p.$bold ? 700 : 400)};
  fill: #000;
`;
const Locator = styled.div`
  position: absolute;
  left: 0;
  top: 19px;
  width: 99px;
  height: 80px;
  background: linear-gradient(#b8c8dc 0 12px, #d8e3f0 22px);
  border: 1px solid #555;
  border-left: 0;
  padding: 10px 7px 0 7px;
`;
const LocTop = styled.div`
  display: flex;
  align-items: center;
  justify-content: space-between;
  height: 20px;
  color: #8f97a2;
  font-size: 12.5px;
`;
const LocClose = styled.div`
  width: 18px;
  height: 18px;
  margin-right: 4px;
  background: #9a9a9a;
  color: #fff;
  font-size: 11px;
  font-weight: 700;
  line-height: 15px;
  text-align: center;
`;
const LocMap = styled.div`
  height: 39px;
  background: #fff;
  margin-top: 2px;
`;
const LocSvg = styled.svg`
  display: block;
  width: 100%;
  height: 100%;
`;
const Scale = styled.div<{ $x: number; $w: number }>`
  position: absolute;
  left: ${p => p.$x}px;
  bottom: 4px;
  width: ${p => p.$w}px;
  font-family: "Liberation Sans", sans-serif;
  font-size: 10.5px;
  color: #4a4a4a;
  line-height: 12px;
  border-bottom: 3px solid #808080;
  padding-bottom: 4px;
`;

const tree: { indent: number; icon: string; label: string; exp?: "+" | "-"; sel?: boolean; guides?: React.ReactNode }[] = [
  { indent: 1, icon: "dbStar", label: "Master Database", guides: <GuideV $x={8} $h={10} $top={12} /> },
  { indent: 17, icon: "catalog", label: "Testing Area", exp: "+", guides: <GuideV $x={8} $h={21} /> },
  { indent: 17, icon: "river", label: "SQL", exp: "+", guides: <GuideV $x={8} $h={21} /> },
  { indent: 17, icon: "catalog", label: "Training", exp: "+", guides: <GuideV $x={8} $h={21} /> },
  { indent: 17, icon: "catalog", label: "KBAs", exp: "+", guides: <GuideV $x={8} $h={21} /> },
  { indent: 17, icon: "catalog", label: "GitHub", exp: "-", guides: <GuideV $x={8} $h={11} /> },
  { indent: 32, icon: "fCyl", label: "0001 - Split pipe every x chainage", exp: "+", guides: <GuideV $x={23} $h={21} /> },
  { indent: 32, icon: "fNet", label: "Model group", exp: "+", guides: <GuideV $x={23} $h={21} /> },
  { indent: 32, icon: "river", label: "0002 - Copy object data to a scenario", exp: "-", guides: <GuideV $x={23} $h={11} /> },
  { indent: 46, icon: "net", label: "Model network", guides: <><GuideV $x={38} $h={21} /><GuideH $x={38} $w={8} /></> },
  { indent: 46, icon: "cyl", label: "Copy object data to a scenario", sel: true, guides: <><GuideV $x={38} $h={11} /><GuideH $x={38} $w={8} /></> },
  { indent: 1, icon: "bin", label: "Recycle Bin (2)" },
];

// page coordinates of the canvas origin, so the drawing reads like the reference
const CX = 323;
const CY = 107;

export default function App() {
  return (
    <Page>
      <Global />
      <MenuBar>
        <Icon name="net" size={15} />
        <MenuList>
          {menus.map(([u, rest, w]) => (
            <MenuItem key={u + rest} $w={w}><u>{u}</u>{rest}</MenuItem>
          ))}
        </MenuList>
        <WinControls>
          <WinSvg viewBox="0 0 14 14"><path d="M3 11h6" stroke="#111" strokeWidth="2" /></WinSvg>
          <WinSvg viewBox="0 0 14 14"><path d="M4.5 4.5V1.5h7v6h-3M1.5 5.5h7v7h-7z" fill="none" stroke="#111" strokeWidth="1.2" /><path d="M4 2h8M1 6h8" stroke="#111" strokeWidth="1.5" /></WinSvg>
          <WinSvg viewBox="0 0 14 14"><path d="M3 3l8 8M11 3l-8 8" stroke="#111" strokeWidth="1.5" /></WinSvg>
        </WinControls>
      </MenuBar>
      <ToolRow $h={22}>{renderRow(row1)}</ToolRow>
      <ToolRow $h={25} $pt={3}>{renderRow(row2)}</ToolRow>
      <Main>
        <Dock>
          <PanelHead>
            <PanelGrip />
            <PanelTitle>Master Database</PanelTitle>
            <PanelButtons>
              <WinSvg viewBox="0 0 14 14"><rect x="2.5" y="2.5" width="9" height="9" fill="none" stroke="#888" /></WinSvg>
              <WinSvg viewBox="0 0 14 14"><path d="M3 3l8 8M11 3l-8 8" stroke="#111" strokeWidth="1.4" /></WinSvg>
            </PanelButtons>
          </PanelHead>
          <PanelTools>
            {renderRow(panelRow)}
            <Toggle><Icon name="treeToggle" /></Toggle>
          </PanelTools>
          <Tree>
            {tree.map(r => (
              <Row key={r.label} $indent={r.indent}>
                {r.guides}
                {r.exp && <Expander $open={r.exp === "-"} />}
                <Icon name={r.icon} size={15} />
                <RowLabel $sel={r.sel}>{r.label}</RowLabel>
              </Row>
            ))}
          </Tree>
          <Tabs>
            <Tab $on $w={104}>Master Database</Tab>
            <Tab $w={86}>Job Progress</Tab>
            <Tab $w={71}>Properties</Tab>
          </Tabs>
        </Dock>
        <Work>
          <DocTab><Icon name="net" size={15} />Model network</DocTab>
          <Canvas>
            <Drawing>
              <g transform={`translate(${-CX} ${-CY})`}>
                <path d="M394 531L1095 545L1839 561" fill="none" stroke="#ffe0a6" strokeWidth="1.8" />
                <path d="M394 531L1095 545L1839 561" fill="none" stroke="#f8ab0c" strokeWidth=".9" />
                <path d="M740 534.5l5 3.5-5 3.5M744 534.5l5 3.5-5 3.5" fill="none" stroke="#f9b233" strokeWidth="1" />
                <path d="M1462 549.5l5 3.5-5 3.5M1466 549.5l5 3.5-5 3.5" fill="none" stroke="#f9b233" strokeWidth="1" />
                <circle cx="394" cy="531" r="4.5" fill="#4db30a" />
                <circle cx="1095" cy="545.5" r="4.5" fill="#4db30a" />
                <circle cx="1839" cy="561" r="4" fill="#fff" stroke="#a5743a" />
                <NodeLabel x="396" y="542" $bold>1</NodeLabel>
                <NodeLabel x="1096" y="556" $bold>3</NodeLabel>
                <NodeLabel x="1840" y="572" $bold>2</NodeLabel>
                <path d="M587 556v15l3.4-3 2.4 5.6 2.6-1.2-2.4-5.4h4.8z" fill="#fff" stroke="#333" />
              </g>
            </Drawing>
            <Locator>
              <LocTop>Locator<LocClose>x</LocClose></LocTop>
              <LocMap>
                <LocSvg viewBox="0 0 84 39">
                  <path d="M0 18h16l1 1h40l1 1h26" stroke="#a9aeb4" fill="none" />
                </LocSvg>
              </LocMap>
            </Locator>
            <Scale $x={5} $w={88}>50 m</Scale>
            <Scale $x={100} $w={136}>250 ft</Scale>
          </Canvas>
        </Work>
      </Main>
    </Page>
  );
}
